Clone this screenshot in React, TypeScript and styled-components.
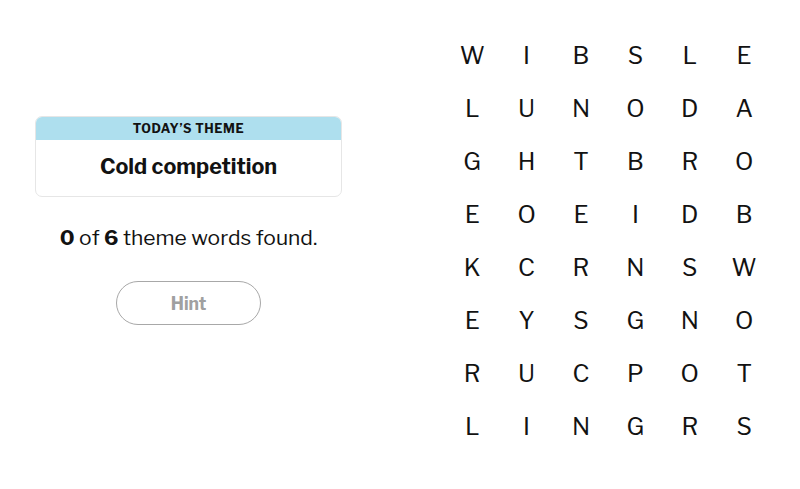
import React from 'react';
import styled, { createGlobalStyle } from 'styled-components';

const GlobalStyle = createGlobalStyle`
  body {
    margin: 0;
    background: #fff;
    font-family: 'Libre Franklin', 'Liberation Sans', Arial, sans-serif;
    color: #121212;
  }
`;

const Page = styled.div`
  display: flex;
  flex-direction: row;
  width: 800px;
  height: 489px;
`;

const Sidebar = styled.div`
  display: flex;
  flex-direction: column;
  align-items: center;
  width: 307px;
  margin-left: 35px;
  padding-top: 116px;
`;

const ThemeCard = styled.div`
  width: 100%;
  box-sizing: border-box;
  border: 1px solid #e6e6e6;
  border-radius: 7px;
  overflow: hidden;
  height: 81px;
`;

const ThemeHeader = styled.div`
  background: #aedfee;
  height: 23px;
  display: flex;
  align-items: center;
  justify-content: center;
  font-size: 12.5px;
  font-weight: 700;
  letter-spacing: 0.6px;
  text-transform: uppercase;
`;

const ThemeName = styled.div`
  height: 56px;
  display: flex;
  align-items: center;
  justify-content: center;
  font-size: 21.5px;
  font-weight: 700;
  padding-bottom: 4px;
  box-sizing: border-box;
`;

const Progress = styled.p`
  margin: 27px 0 0;
  font-size: 21px;
  line-height: 28px;
  b {
    font-weight: 700;
  }
`;

const HintButton = styled.button`
  margin-top: 29px;
  width: 145px;
  height: 44px;
  border-radius: 22px;
  border: 1.5px solid #a8a8a8;
  background: #fff;
  color: #a0a0a0;
  font-family: inherit;
  font-size: 17.5px;
  font-weight: 700;
`;

const Board = styled.div`
  display: grid;
  grid-template-columns: repeat(6, 54.4px);
  grid-auto-rows: 53px;
  margin-left: 103px;
  padding-top: 29px;
`;

const Letter = styled.div`
  display: flex;
  align-items: center;
  justify-content: center;
  font-size: 24px;
  font-weight: 400;
  color: #121212;
`;

const rows = [
  'WIBSLE',
  'LUNODA',
  'GHTBRO',
  'EOEIDB',
  'KCRNSW',
  'EYSGNO',
  'RUCPOT',
  'LINGRS',
];

export default function App() {
  return (
    <>
      <GlobalStyle />
      <Page>
        <Sidebar>
          <ThemeCard>
            <ThemeHeader>Today’s theme</ThemeHeader>
            <ThemeName>Cold competition</ThemeName>
          </ThemeCard>
          <Progress>
            <b>0</b> of <b>6</b> theme words found.
          </Progress>
          <HintButton>Hint</HintButton>
        </Sidebar>
        <Board>
          {rows.map((row, r) =>
            row.split('').map((ch, c) => <Letter key={`${r}-${c}`}>{ch}</Letter>)
          )}
        </Board>
      </Page>
    </>
  );
}
